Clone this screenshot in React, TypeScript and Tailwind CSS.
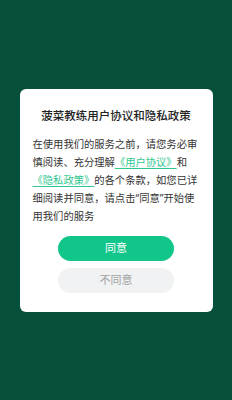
import React from "react";

const FONT = { fontFamily: '"Noto Sans", "Noto Sans CJK SC", sans-serif' };

export default function App() {
  return (
    <div
      className="flex h-[400px] w-[232px] items-center justify-center bg-[#064f3a]"
      style={FONT}
    >
      <div className="flex w-[193px] flex-col rounded-[6px] bg-white px-[13px] pb-[19px] pt-[19px]">
        <h1 className="text-center text-[11.5px] font-medium leading-[16px] text-[#222]">
          菠菜教练用户协议和隐私政策
        </h1>
        <p className="mt-[11px] text-[10.3px] leading-[18px] text-[#333]">
          在使用我们的服务之前，请您务必审慎阅读、充分理解
          <a className="text-[#2fc891] underline underline-offset-2">《用户协议》</a>
          和
          <a className="text-[#2fc891] underline underline-offset-2">《隐私政策》</a>
          的各个条款，如您已详细阅读并同意，请点击“同意”开始使用我们的服务
        </p>
        <div className="mt-[11px] flex flex-col items-center gap-[7px]">
          <button className="h-[25px] w-[116px] rounded-full bg-[#10c68a] text-[11px] text-white">
            同意
          </button>
          <button className="h-[25px] w-[116px] rounded-full bg-[#f1f2f4] text-[11px] text-[#a3a3a3]">
            不同意
          </button>
        </div>
      </div>
    </div>
  );
}
